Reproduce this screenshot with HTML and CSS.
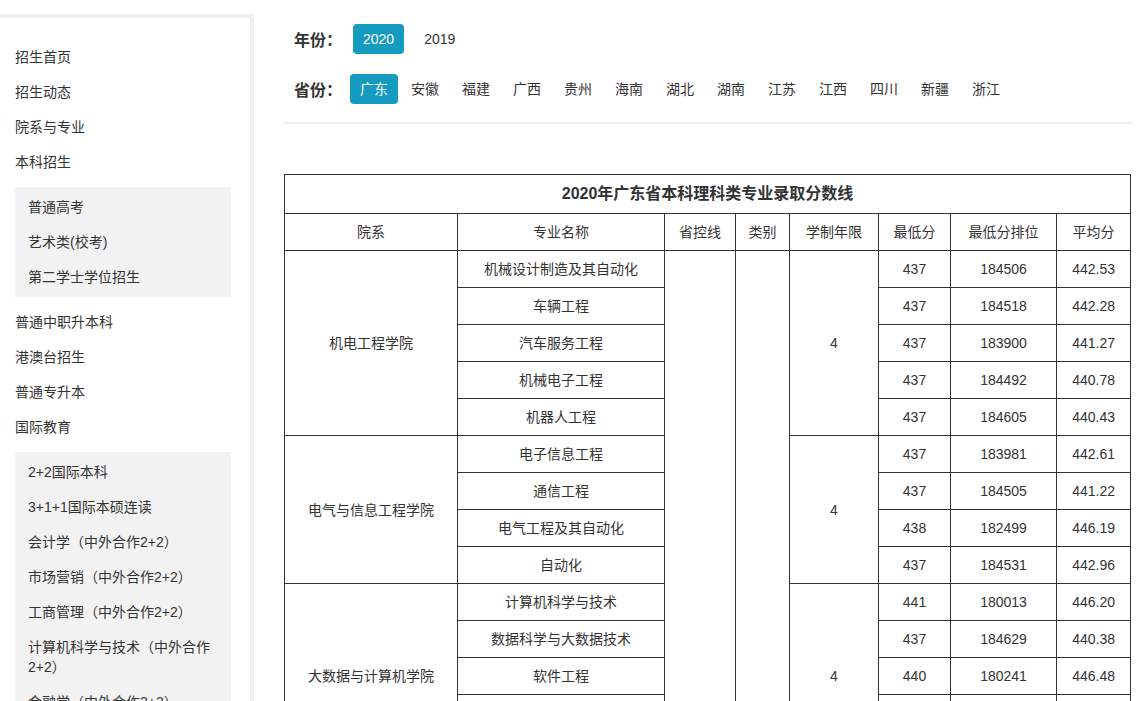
FILE: index.html
```html
<!DOCTYPE html>
<html lang="zh-CN">
<head>
<meta charset="utf-8">
<title>录取分数线</title>
<link rel="stylesheet" href="styles.css">
</head>
<body>
<div class="page">
  <aside class="sidebar">
    <ul class="menu">
      <li class="menu-item">招生首页</li>
      <li class="menu-item">招生动态</li>
      <li class="menu-item">院系与专业</li>
      <li class="menu-item">本科招生</li>
      <li class="submenu">
        <ul>
          <li class="sub-item">普通高考</li>
          <li class="sub-item">艺术类(校考)</li>
          <li class="sub-item">第二学士学位招生</li>
        </ul>
      </li>
      <li class="menu-item">普通中职升本科</li>
      <li class="menu-item">港澳台招生</li>
      <li class="menu-item">普通专升本</li>
      <li class="menu-item">国际教育</li>
      <li class="submenu">
        <ul>
          <li class="sub-item">2+2国际本科</li>
          <li class="sub-item">3+1+1国际本硕连读</li>
          <li class="sub-item">会计学（中外合作2+2）</li>
          <li class="sub-item">市场营销（中外合作2+2）</li>
          <li class="sub-item">工商管理（中外合作2+2）</li>
          <li class="sub-item">计算机科学与技术（中外合作2+2）</li>
          <li class="sub-item">金融学（中外合作2+2）</li>
          <li class="sub-item">国际经济与贸易（中外合作2+2）</li>
        </ul>
      </li>
    </ul>
  </aside>

  <main class="main">
    <div class="filters">
      <div class="filter-row">
        <span class="filter-label">年份：</span>
        <div class="options years">
          <span class="opt active">2020</span>
          <span class="opt">2019</span>
        </div>
      </div>
      <div class="filter-row">
        <span class="filter-label">省份：</span>
        <div class="options provinces">
          <span class="opt active">广东</span>
          <span class="opt">安徽</span>
          <span class="opt">福建</span>
          <span class="opt">广西</span>
          <span class="opt">贵州</span>
          <span class="opt">海南</span>
          <span class="opt">湖北</span>
          <span class="opt">湖南</span>
          <span class="opt">江苏</span>
          <span class="opt">江西</span>
          <span class="opt">四川</span>
          <span class="opt">新疆</span>
          <span class="opt">浙江</span>
        </div>
      </div>
    </div>

    <table class="scores">
      <colgroup>
        <col class="c-college">
        <col class="c-major">
        <col class="c-line">
        <col class="c-type">
        <col class="c-years">
        <col class="c-min">
        <col class="c-rank">
        <col class="c-avg">
      </colgroup>
      <tr class="title-row"><th colspan="8">2020年广东省本科理科类专业录取分数线</th></tr>
      <tr class="head-row">
        <td>院系</td><td>专业名称</td><td>省控线</td><td>类别</td><td>学制年限</td><td>最低分</td><td>最低分排位</td><td>平均分</td>
      </tr>
      <tr>
        <td rowspan="5">机电工程学院</td><td>机械设计制造及其自动化</td>
        <td rowspan="14"></td><td rowspan="14"></td>
        <td rowspan="5">4</td><td>437</td><td>184506</td><td>442.53</td>
      </tr>
      <tr><td>车辆工程</td><td>437</td><td>184518</td><td>442.28</td></tr>
      <tr><td>汽车服务工程</td><td>437</td><td>183900</td><td>441.27</td></tr>
      <tr><td>机械电子工程</td><td>437</td><td>184492</td><td>440.78</td></tr>
      <tr><td>机器人工程</td><td>437</td><td>184605</td><td>440.43</td></tr>
      <tr>
        <td rowspan="4">电气与信息工程学院</td><td>电子信息工程</td>
        <td rowspan="4">4</td><td>437</td><td>183981</td><td>442.61</td>
      </tr>
      <tr><td>通信工程</td><td>437</td><td>184505</td><td>441.22</td></tr>
      <tr><td>电气工程及其自动化</td><td>438</td><td>182499</td><td>446.19</td></tr>
      <tr><td>自动化</td><td>437</td><td>184531</td><td>442.96</td></tr>
      <tr>
        <td rowspan="5">大数据与计算机学院</td><td>计算机科学与技术</td>
        <td rowspan="5">4</td><td>441</td><td>180013</td><td>446.20</td>
      </tr>
      <tr><td>数据科学与大数据技术</td><td>437</td><td>184629</td><td>440.38</td></tr>
      <tr><td>软件工程</td><td>440</td><td>180241</td><td>446.48</td></tr>
      <tr><td>网络工程</td><td>437</td><td>184450</td><td>441.05</td></tr>
      <tr><td>物联网工程</td><td>437</td><td>184398</td><td>441.62</td></tr>
    </table>
  </main>
</div>
</body>
</html>
```

FILE: styles.css
```css
html, body {
  margin: 0;
  padding: 0;
  background: #fff;
  overflow: hidden;
}

body {
  font-family: "Liberation Sans", "Noto Sans CJK SC", sans-serif;
  font-size: 14px;
  color: #333;
}

ul {
  list-style: none;
  margin: 0;
  padding: 0;
}

.page {
  display: flex;
  align-items: flex-start;
}

/* Sidebar */
.sidebar {
  flex: 0 0 auto;
  width: 216px;
  margin-top: 14px;
  padding: 22px 19px 40px 15px;
  border-top: 4px solid #efefef;
  border-right: 4px solid #efefef;
}

.menu-item {
  line-height: 20px;
  padding: 7px 0 8px;
  color: #333;
}

.submenu {
  background: #f2f2f2;
  margin: 7px 0 8px;
  padding: 3px 13px 2px 13px;
}

.sub-item {
  line-height: 20px;
  padding: 7px 0 8px;
  color: #333;
}

/* Main */
.main {
  flex: 0 0 auto;
  width: 848px;
  margin-left: 30px;
}

.filters {
  padding: 24px 0 18px;
  border-bottom: 2px solid #eeeeee;
  display: flex;
  flex-direction: column;
  gap: 20px;
}

.filter-row {
  display: flex;
  align-items: center;
  height: 30px;
}

.filter-label {
  width: 56px;
  padding-left: 10px;
  font-size: 16px;
  font-weight: bold;
  color: #333;
  white-space: nowrap;
}

.options {
  display: flex;
}

.years {
  margin-left: 3px;
  gap: 10px;
}

.provinces {
  gap: 3px;
}

.opt {
  display: block;
  height: 30px;
  line-height: 30px;
  padding: 0 10px;
  border-radius: 4px;
  color: #333;
  white-space: nowrap;
}

.opt.active {
  background: #159bbf;
  color: #fff;
}

/* Table */
.scores {
  margin-top: 50px;
  width: 847px;
  table-layout: fixed;
  border-collapse: collapse;
}

.c-college { width: 173px; }
.c-major { width: 207px; }
.c-line { width: 71px; }
.c-type { width: 54px; }
.c-years { width: 89px; }
.c-min { width: 72px; }
.c-rank { width: 106px; }
.c-avg { width: 74px; }

.scores th,
.scores td {
  border: 1px solid #333;
  padding: 0;
  text-align: center;
  vertical-align: middle;
  line-height: 20px;
  height: 36px;
  color: #333;
  font-size: 14px;
}

.scores .title-row th {
  height: 38px;
  font-size: 16px;
  font-weight: bold;
}
```
